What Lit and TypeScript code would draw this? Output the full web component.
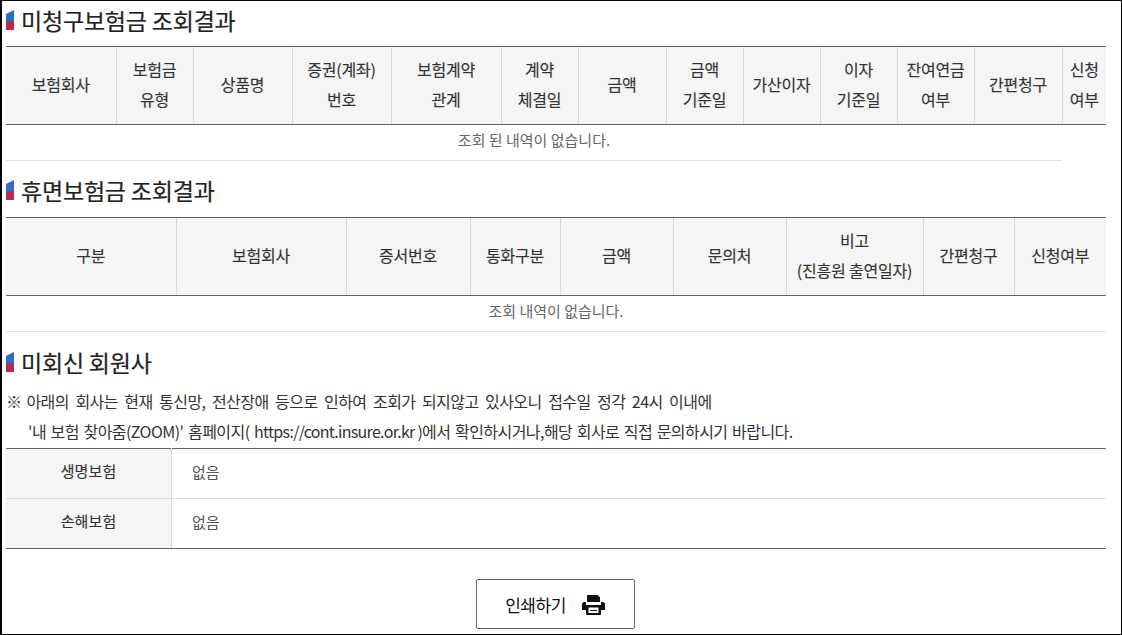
import { LitElement, html, css } from "lit";
import { customElement } from "lit/decorators.js";

const t1 = [
  { w: 110, h: ["보험회사"] }, { w: 77, h: ["보험금", "유형"] }, { w: 99, h: ["상품명"] },
  { w: 99, h: ["증권(계좌)", "번호"] }, { w: 110, h: ["보험계약", "관계"] }, { w: 77, h: ["계약", "체결일"] },
  { w: 88, h: ["금액"] }, { w: 77, h: ["금액", "기준일"] }, { w: 77, h: ["가산이자"] },
  { w: 77, h: ["이자", "기준일"] }, { w: 77, h: ["잔여연금", "여부"] }, { w: 88, h: ["간편청구"] }, { w: 44, h: ["신청", "여부"] },
];
const t2 = [
  { w: 170, h: ["구분"] }, { w: 170, h: ["보험회사"] }, { w: 124, h: ["증서번호"] }, { w: 90, h: ["통화구분"] },
  { w: 113, h: ["금액"] }, { w: 113, h: ["문의처"] }, { w: 137, h: ["비고", "(진흥원 출연일자)"] },
  { w: 91, h: ["간편청구"] }, { w: 92, h: ["신청여부"] },
];

@customElement("app-root")
export class AppRoot extends LitElement {
  static styles = css`
    :host {
      display: block; box-sizing: border-box; width: 1122px; height: 635px; overflow: hidden;
      background: #fff; border: solid #000; border-width: 1px 1px 1px 2px;
      padding: 0 15px 0 4px;
      font-family: "Noto Sans CJK KR", "Noto Sans", sans-serif; color: #333;
    }
    h2 {
      display: flex; align-items: center; gap: 7px; margin: 0; box-sizing: border-box;
      font-size: 23px; font-weight: 400; letter-spacing: -0.2px; color: #222; -webkit-text-stroke: 0.2px #222;
    }
    .first { height: 45px; padding-bottom: 7px; }
    .next { margin-top: 11px; height: 45px; padding-bottom: 9px; }
    .third { margin-top: 10px; height: 44px; padding-bottom: 5px; }
    h2 svg { flex: none; }
    table { border-collapse: collapse; table-layout: fixed; width: 1100px; }
    thead tr { height: 78px; }
    th {
      background: #f5f5f5; border-top: 1px solid #666; border-bottom: 1px solid #666;
      border-left: 1px solid #d9d9d9; font-size: 16px; font-weight: 400; line-height: 30px;
      letter-spacing: -0.2px; color: #333; padding: 0 0 3px; overflow: visible; white-space: nowrap;
      -webkit-text-stroke: 0.15px #333;
    }
    th:first-child { border-left: 0; }
    td.empty {
      height: 36px; padding: 0 0 6px; box-sizing: border-box; text-align: center; font-size: 15px;
      color: #666; border-bottom: 1px solid #e2e2e2;
    }
    .note {
      margin: 0; font-size: 16px; line-height: 30px; letter-spacing: -0.55px; word-spacing: 3.4px;
      color: #333; white-space: pre; height: 30px;
    }
    .mark { letter-spacing: -2px; }
    .note.l2 { padding-left: 22px; word-spacing: 1.5px; height: 32px; }
    .url { letter-spacing: -0.7px; }
    .tight { word-spacing: 0; }
    .info { border-top: 1px solid #666; }
    .info th {
      width: 165px; height: 44px; border-top: 0; border-left: 0; border-right: 1px solid #d9d9d9;
      border-bottom: 1px solid #ddd; font-size: 15px; padding-bottom: 5px; letter-spacing: 0.1px;
    }
    .info td {
      border-bottom: 1px solid #ddd; padding: 0 0 5px 20px; font-size: 15px; color: #555;
    }
    .info tr:last-child th, .info tr:last-child td { border-bottom: 1px solid #666; }
    .actions { display: flex; justify-content: center; margin-top: 30px; padding-right: 2px; }
    button {
      display: flex; align-items: center; justify-content: center; gap: 16px;
      width: 159px; height: 50px; box-sizing: border-box; background: #fff;
      border: 1px solid #666; border-radius: 2px; padding: 0;
      font: 400 17px "Noto Sans CJK KR", sans-serif; letter-spacing: -0.5px; color: #111;
    }
    button svg { margin-top: 2px; }
  `;

  private bullet() {
    return html`<svg width="8" height="20" viewBox="0 0 8 20" preserveAspectRatio="none">
      <path d="M0 4 L8 0 V11 H0 Z" fill="#2a6fc4"/><path d="M0 11 H8 V20 H0 Z" fill="#b92c48"/></svg>`;
  }

  private table(cols: { w: number; h: string[] }[], msg: string, colspan: number, wide = false) {
    return html`<table>
      <colgroup>${cols.map((c) => html`<col style="width:${c.w}px" />`)}</colgroup>
      <thead><tr>${cols.map((c) => html`<th>${c.h.map((l, i) => html`${i ? html`<br />` : ""}${l}`)}</th>`)}</tr></thead>
      <tbody><tr><td class="empty" colspan=${colspan}>${msg}</td>${wide ? html`<td></td>` : ""}</tr></tbody>
    </table>`;
  }

  render() {
    return html`
      <h2 class="first">${this.bullet()}미청구보험금 조회결과</h2>
      ${this.table(t1, "조회 된 내역이 없습니다.", 12, true)}
      <h2 class="next">${this.bullet()}휴면보험금 조회결과</h2>
      ${this.table(t2, "조회 내역이 없습니다.", 9)}
      <h2 class="third">${this.bullet()}미회신 회원사</h2>
      <p class="note"><span class="mark">※</span> 아래의 회사는 현재 통신망, 전산장애 등으로 인하여 조회가 되지않고 있사오니 접수일 정각 24시 이내에</p>
      <p class="note l2">'내 보험 찾아줌(ZOOM)' 홈페이지( <span class="url tight">https://cont.insure.or.kr )</span>에서 확인하시거나,해당 회사로 직접 문의하시기 바랍니다.</p>
      <table class="info">
        <tr><th>생명보험</th><td>없음</td></tr>
        <tr><th>손해보험</th><td>없음</td></tr>
      </table>
      <div class="actions">
        <button>인쇄하기
          <svg width="23" height="20" viewBox="0 0 23 20"><path fill="#111" fill-rule="evenodd" d="M6 0h9.500L18 2.500V7H5V1a1 1 0 0 1 1-1ZM2.500 7H4v3h15V7h1.500A2.500 2.500 0 0 1 23 9.500V15h-4v4a1 1 0 0 1-1 1H5a1 1 0 0 1-1-1v-4H0V9.500A2.500 2.500 0 0 1 2.500 7ZM6.500 12.500V18h10v-5.500Zm1.500 2.500h7v1H8Z"/></svg>
        </button>
      </div>
    `;
  }
}
